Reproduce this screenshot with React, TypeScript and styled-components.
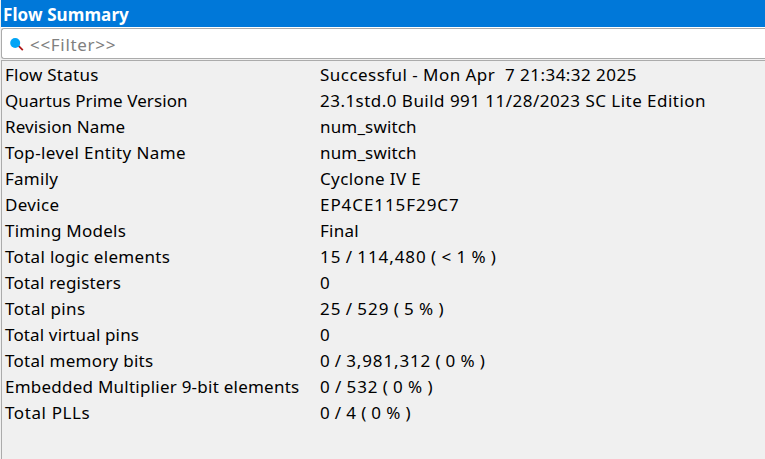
import React from 'react';
import styled, { createGlobalStyle } from 'styled-components';

const GlobalStyle = createGlobalStyle`
  * { box-sizing: border-box; }
  body {
    margin: 0;
    overflow: hidden;
    background: #f0f0f0;
    color: #000;
    font: 17px/26px "Noto Sans", sans-serif;
  }
`;

const Panel = styled.main`
  display: flex;
  flex-direction: column;
  height: 459px;
  padding-left: 1px;
  overflow: hidden;
`;

const TitleBar = styled.h1`
  flex: none;
  height: 28px;
  margin: 0;
  padding-left: 2px;
  background: #0078d9;
  border-bottom: 1px solid #fff;
  color: #fff;
  font-size: 17px;
  font-weight: 700;
  line-height: 29px;
  letter-spacing: 0.1px;
`;

const FilterBar = styled.div`
  flex: none;
  display: flex;
  align-items: center;
  gap: 6px;
  height: 31px;
  margin-bottom: 1px;
  padding-left: 8px;
  background: #fff;
  border: 1px solid #ababab;
  border-right: 0;
  border-radius: 3px 0 0 3px;
`;

const FilterHint = styled.span`
  padding-top: 2px;
  color: #808080;
  letter-spacing: 0.68px;
`;

const Report = styled.dl`
  flex: 1;
  margin: 0;
  padding: 1px 0 0 3px;
  border: solid #ababab;
  border-width: 1px 0 0 1px;
`;

const Row = styled.div`
  display: grid;
  grid-template-columns: 315px 1fr;
  height: 26px;
`;

const Label = styled.dt<{ $tracking: number }>`
  white-space: pre;
  letter-spacing: ${(p) => p.$tracking}px;
`;

const Value = styled.dd<{ $tracking: number; $usage: boolean }>`
  margin: 0;
  white-space: pre;
  letter-spacing: ${(p) => p.$tracking}px;
  word-spacing: ${(p) => (p.$usage ? '-1px' : 'normal')};
`;

type Entry = [label: string, labelTracking: number, value: string, valueTracking: number];

const entries: Entry[] = [
  ['Flow Status', 0.26, 'Successful - Mon Apr  7 21:34:32 2025', 0.46],
  ['Quartus Prime Version', 0.08, '23.1std.0 Build 991 11/28/2023 SC Lite Edition', 0.47],
  ['Revision Name', 0.13, 'num_switch', 0.16],
  ['Top-level Entity Name', 0.39, 'num_switch', 0.16],
  ['Family', 0.25, 'Cyclone IV E', 0.38],
  ['Device', 0.32, 'EP4CE115F29C7', 0.93],
  ['Timing Models', 0.26, 'Final', 0.25],
  ['Total logic elements', 0.31, '15 / 114,480 ( < 1 % )', 0.93],
  ['Total registers', 0.2, '0', 0],
  ['Total pins', 0.4, '25 / 529 ( 5 % )', 0.94],
  ['Total virtual pins', 0.14, '0', 0],
  ['Total memory bits', 0.26, '0 / 3,981,312 ( 0 % )', 0.85],
  ['Embedded Multiplier 9-bit elements', 0.24, '0 / 532 ( 0 % )', 0.91],
  ['Total PLLs', 0.6, '0 / 4 ( 0 % )', 0.85],
];

function SearchIcon() {
  return (
    <svg width="14" height="14" viewBox="0 0 14 14" aria-hidden="true">
      <path d="M8.3 8.7 12.8 13.2" stroke="#b01818" strokeWidth="1.8" />
      <circle cx="5.2" cy="6" r="5" fill="#03a5f6" />
    </svg>
  );
}

export default function App() {
  return (
    <>
      <GlobalStyle />
      <Panel>
        <TitleBar>Flow Summary</TitleBar>
        <FilterBar>
          <SearchIcon />
          <FilterHint>&lt;&lt;Filter&gt;&gt;</FilterHint>
        </FilterBar>
        <Report>
          {entries.map(([label, labelTracking, value, valueTracking]) => (
            <Row key={label}>
              <Label $tracking={labelTracking}>{label}</Label>
              <Value $tracking={valueTracking} $usage={value.includes('%')}>
                {value}
              </Value>
            </Row>
          ))}
        </Report>
      </Panel>
    </>
  );
}
